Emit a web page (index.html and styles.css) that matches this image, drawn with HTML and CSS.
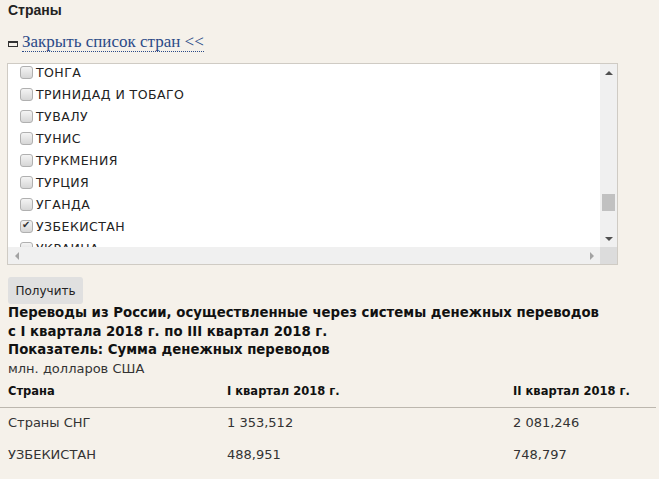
FILE: index.html
```html
<!DOCTYPE html>
<html lang="ru">
<head>
    <meta charset="UTF-8">
    <title>Переводы из России</title>
    <link rel="stylesheet" href="styles.css">
</head>
<body>
    <div class="filter">
        <h3 class="filter-title">Страны</h3>
        <div class="toggle">
            <span class="toggle-icon"></span>
            <a href="#" class="toggle-link">Закрыть список стран &lt;&lt;</a>
        </div>

        <!-- country list with scrollbars -->
        <div class="country-box">
            <div class="country-list">
                <label class="country"><input type="checkbox"> ТОНГА</label>
                <label class="country"><input type="checkbox"> ТРИНИДАД И ТОБАГО</label>
                <label class="country"><input type="checkbox"> ТУВАЛУ</label>
                <label class="country"><input type="checkbox"> ТУНИС</label>
                <label class="country"><input type="checkbox"> ТУРКМЕНИЯ</label>
                <label class="country"><input type="checkbox"> ТУРЦИЯ</label>
                <label class="country"><input type="checkbox"> УГАНДА</label>
                <label class="country"><input type="checkbox" checked> УЗБЕКИСТАН</label>
                <label class="country"><input type="checkbox"> УКРАИНА</label>
            </div>
            <div class="vscroll">
                <span class="arrow up"></span>
                <span class="track"><span class="thumb"></span></span>
                <span class="arrow down"></span>
            </div>
            <div class="hscroll">
                <span class="arrow left"></span>
                <span class="arrow right"></span>
            </div>
            <div class="corner"></div>
        </div>

        <button class="submit">Получить</button>

        <div class="report-title">
            Переводы из России, осуществленные через системы денежных переводов<br>
            с I квартала 2018 г. по III квартал 2018 г.<br>
            Показатель: Сумма денежных переводов
        </div>
        <div class="units">млн. долларов США</div>
    </div>

    <table class="data">
        <thead>
            <tr>
                <th class="col-country">Страна</th>
                <th class="col-q1">I квартал 2018 г.</th>
                <th>II квартал 2018 г.</th>
            </tr>
        </thead>
        <tbody>
            <tr>
                <td>Страны СНГ</td>
                <td>1 353,512</td>
                <td>2 081,246</td>
            </tr>
            <tr>
                <td>УЗБЕКИСТАН</td>
                <td>488,951</td>
                <td>748,797</td>
            </tr>
        </tbody>
    </table>
</body>
</html>
```

FILE: styles.css
```css
* {
    box-sizing: border-box;
}
body {
    margin: 0;
    background-color: #f5f1ea;
    font-family: "DejaVu Sans", Verdana, sans-serif;
    color: #222;
}
.filter {
    padding: 0 8px;
}
.filter-title {
    margin: 0;
    padding-top: 2px;
    font-family: "Liberation Sans", Arial, sans-serif;
    font-size: 14px;
    line-height: 17px;
    font-weight: bold;
    color: #222;
}
.toggle {
    display: flex;
    align-items: center;
    gap: 4px;
    margin-top: 12px;
    height: 22px;
}
.toggle-icon {
    width: 10px;
    height: 6px;
    border: 1px solid #333;
    border-top-width: 2px;
    margin-top: 3px;
}
.toggle-link {
    font-family: "Liberation Serif", "Times New Roman", serif;
    font-size: 17px;
    color: #2b4a87;
    text-decoration: none;
    border-bottom: 1px dotted #2b4a87;
    line-height: 19px;
}
.country-box {
    display: grid;
    grid-template-columns: 1fr 17px;
    grid-template-rows: 1fr 17px;
    width: 611px;
    height: 202px;
    margin-top: 10px;
    margin-left: -1px;
    border: 1px solid #cfcbc4;
    background-color: #fff;
}
.country-list {
    overflow: hidden;
    padding: 0 0 0 12px;
}
.country {
    display: flex;
    align-items: center;
    gap: 3px;
    height: 22px;
    font-size: 12.5px;
    color: #222;
    letter-spacing: 0.45px;
}
.country:first-child {
    margin-top: -3px;
}
.country input {
    appearance: none;
    -webkit-appearance: none;
    width: 13px;
    height: 13px;
    margin: 0;
    border: 1px solid #b0b0b0;
    border-radius: 3px;
    background: linear-gradient(#f4f4f4, #d6d6d6);
    position: relative;
}
.country input:checked::after {
    content: "\2714";
    position: absolute;
    left: 1px;
    top: -2px;
    font-size: 10px;
    color: #333;
}
.vscroll {
    display: flex;
    flex-direction: column;
    background-color: #f0f0f0;
}
.track {
    flex: 1;
    padding: 0 2px;
}
.thumb {
    display: block;
    height: 17px;
    margin-top: 113px;
    background-color: #c1c1c1;
}
.hscroll {
    display: flex;
    justify-content: space-between;
    background-color: #f0f0f0;
}
.corner {
    background-color: #dcdcdc;
}
.arrow {
    display: flex;
    align-items: center;
    justify-content: center;
    width: 17px;
    height: 17px;
}
.arrow::before {
    content: "";
    border: 4px solid transparent;
}
.arrow.up::before {
    border-bottom-color: #505050;
    margin-top: -4px;
}
.arrow.down::before {
    border-top-color: #505050;
    margin-top: 4px;
}
.arrow.left::before {
    border-right-color: #a3a3a3;
    margin-left: -4px;
}
.arrow.right::before {
    border-left-color: #a3a3a3;
    margin-left: 4px;
}
.submit {
    display: block;
    margin-top: 12px;
    width: 75px;
    height: 27px;
    padding: 0;
    border: none;
    border-radius: 3px;
    background-color: #e0e0e0;
    font-family: "DejaVu Sans", Verdana, sans-serif;
    font-size: 12px;
    color: #222;
}
.report-title {
    font-weight: bold;
    font-size: 13.3px;
    line-height: 18.5px;
    color: #111;
}
.units {
    font-size: 13px;
    line-height: 18.5px;
    color: #333;
}
.data {
    width: 656px;
    margin-top: 0;
    border-collapse: collapse;
}
.data th {
    text-align: left;
    font-size: 11.5px;
    line-height: 14px;
    font-weight: bold;
    color: #111;
    padding: 6px 8px 9px;
    border-bottom: 1px solid #bcb7ae;
}
.data td {
    font-size: 13px;
    line-height: 16px;
    color: #333;
    padding: 7px 8px 9px;
}
.col-country {
    width: 219px;
}
.col-q1 {
    width: 286px;
}
```
